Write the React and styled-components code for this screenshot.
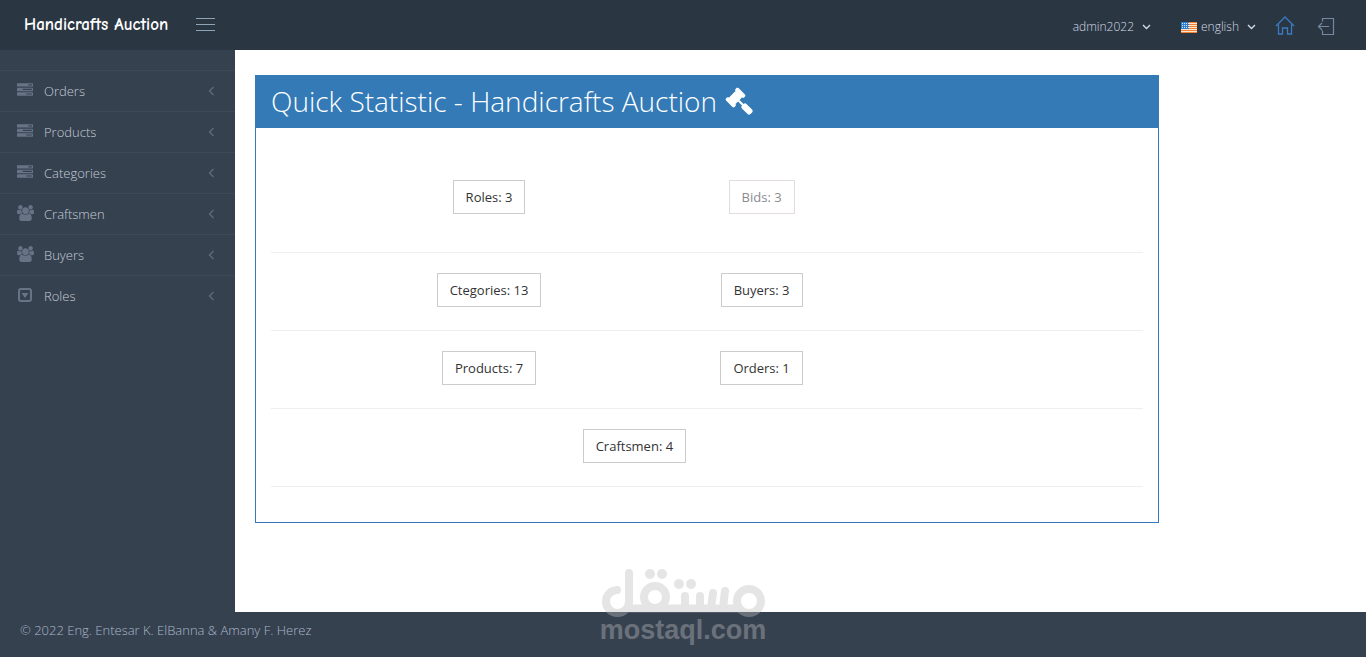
import React from "react";
import styled, { createGlobalStyle } from "styled-components";

const GlobalStyle = createGlobalStyle`
  * { box-sizing: border-box; }
  body {
    margin: 0;
    background: #364150;
    color: #333;
    font-family: "Open Sans", "Noto Sans", sans-serif;
    font-size: 13px;
    line-height: 20px;
  }
`;

const Page = styled.div`
  position: relative;
  display: flex;
  flex-direction: column;
  min-height: 100vh;
`;

const Header = styled.header`
  display: flex;
  align-items: center;
  height: 50px;
  background: #2b3643;
`;

const Brand = styled.a`
  width: 196px;
  padding-left: 24px;
  color: #fff;
  font-family: "Comic Sans MS", "Comic Neue", Lato, sans-serif;
  font-size: 17px;
  font-weight: 700;
  text-decoration: none;
  white-space: nowrap;
`;

const PlainButton = styled.button`
  display: flex;
  align-items: center;
  padding: 0;
  border: 0;
  background: none;
  color: #d3dbe5;
  font: inherit;
  cursor: pointer;
`;

const MenuToggle = styled(PlainButton)`
  flex-direction: column;
  gap: 5px;
  padding-bottom: 2px;
`;

const ToggleBar = styled.span`
  width: 19px;
  height: 1px;
  background: #8ea3b6;
`;

const TopNav = styled.nav`
  display: flex;
  align-items: center;
  margin-left: auto;
  padding: 2px 31px 0 0;
`;

const NavButton = styled(PlainButton)`
  margin-right: ${(p) => p.$space}px;
  padding-top: 2px;
  font-size: 12px;
  font-weight: 300;
  gap: ${(p) => p.$gap}px;
`;

const NavLabel = styled.span`
  margin-right: 4px;
`;

const IconLink = styled.a`
  display: flex;
  margin-right: ${(p) => p.$space || 0}px;
  color: ${(p) => p.$color};
`;

const Body = styled.div`
  display: flex;
  flex: 1;
`;

const Sidebar = styled.nav`
  flex: 0 0 235px;
  padding-top: 20px;
`;

const Menu = styled.ul`
  margin: 0;
  padding: 0;
  list-style: none;
`;

const MenuLink = styled.a`
  display: flex;
  align-items: center;
  height: 41px;
  padding: 0 20px 0 16px;
  border-top: 1px solid #3d4957;
  color: #c3cbd6;
  font-weight: 300;
  text-decoration: none;
`;

const MenuIcon = styled.span`
  display: flex;
  justify-content: center;
  width: 18px;
  margin-right: 10px;
  padding-bottom: 2px;
  color: #687485;
`;

const MenuArrow = styled.svg`
  margin-left: auto;
  color: #606c7d;
`;

const Content = styled.main`
  flex: 1;
  padding: 25px 20px 40px;
  background: #fff;
`;

const Panel = styled.section`
  width: calc((100% + 30px) * 10 / 12 - 30px);
  border: 1px solid #337ab7;
`;

const PanelTitle = styled.h1`
  display: flex;
  align-items: center;
  gap: 8px;
  height: 52px;
  margin: 0;
  padding: 0 15px 2px;
  background: #337ab7;
  color: #fff;
  font-size: 28px;
  font-weight: 300;
`;

const PanelBody = styled.div`
  padding: 52px 15px 35px;
`;

const StatRow = styled.div`
  display: grid;
  grid-template-columns: ${(p) => (p.$single ? "10fr 2fr" : "4fr 1fr 3fr")};
  justify-items: center;
  padding-bottom: ${(p) => (p.$tall ? 38 : 23)}px;
  border-bottom: 1px solid #eee;
  & + & { padding-top: 20px; }
`;

const StatButton = styled.button`
  height: 34px;
  padding: 0 12px;
  border: 1px solid ${(p) => (p.$muted ? "#e2dcdc" : "#ccc")};
  background: #fff;
  color: ${(p) => (p.$muted ? "#8a8a8f" : "#333")};
  font: inherit;
  white-space: nowrap;
`;

const Footer = styled.footer`
  height: 45px;
  padding: 8px 20px 5px;
  color: #a9b6c8;
  font-weight: 300;
`;

const Watermark = styled.div`
  position: absolute;
  left: 50%;
  bottom: 14px;
  display: flex;
  flex-direction: column;
  align-items: center;
  width: 166px;
  margin-left: -83px;
  color: #bebebe;
  opacity: 0.39;
  font: bold 27px/26px "Liberation Sans", sans-serif;
  pointer-events: none;
`;

const ICONS = {
  tasks: {
    box: "0 0 1792 1792",
    size: [16, 16],
    d: "M1024 1408h640v-128h-640v128zM640 896h1024v-128h-1024v128zM1280 384h384v-128h-384v128zM1792 1216v256q0 26-19 45t-45 19h-1664q-26 0-45-19t-19-45v-256q0-26 19-45t45-19h1664q26 0 45 19t19 45zm0-512v256q0 26-19 45t-45 19h-1664q-26 0-45-19t-19-45v-256q0-26 19-45t45-19h1664q26 0 45 19t19 45zm0-512v256q0 26-19 45t-45 19h-1664q-26 0-45-19t-19-45v-256q0-26 19-45t45-19h1664q26 0 45 19t19 45z",
  },
  users: {
    box: "0 0 1920 1792",
    size: [17, 16],
    d: "M593 896q-162 5-265 128h-134q-82 0-138-40.5t-56-118.5q0-353 124-353 6 0 43.5 21t97.5 42.5 119 21.5q67 0 133-23-5 37-5 66 0 139 81 256zm1071 637q0 120-73 189.5t-194 69.5h-874q-121 0-194-69.5t-73-189.5q0-53 3.5-103.5t14-109 26.5-108.5 43-97.5 62-81 85.5-53.5 111.5-20q10 0 43 21.5t73 48 107 48 135 21.5 135-21.5 107-48 73-48 43-21.5q61 0 111.5 20t85.5 53.5 62 81 43 97.5 26.5 108.5 14 109 3.5 103.5zm-1024-1277q0 106-75 181t-181 75-181-75-75-181 75-181 181-75 181 75 75 181zm704 384q0 159-112.5 271.5t-271.5 112.5-271.5-112.5-112.5-271.5 112.5-271.5 271.5-112.5 271.5 112.5 112.5 271.5zm576 225q0 78-56 118.5t-138 40.5h-134q-103-123-265-128 81-117 81-256 0-29-5-66 66 23 133 23 59 0 119-21.5t97.5-42.5 43.5-21q124 0 124 353zm-128-609q0 106-75 181t-181 75-181-75-75-181 75-181 181-75 181 75 75 181z",
  },
  caret: {
    box: "0 0 16 16",
    size: [16, 16],
    d: "M4 1h8q3 0 3 3v8q0 3-3 3H4q-3 0-3-3V4q0-3 3-3zm0 2q-1 0-1 1v8q0 1 1 1h8q1 0 1-1V4q0-1-1-1zM4.5 6h7L8 11z",
  },
  gavel: {
    box: "0 0 1792 1792",
    size: [28, 28],
    d: "M1771 1536q0 53-37 90l-107 108q-39 37-91 37-53 0-90-37l-363-364q-38-36-38-90 0-53 43-96l-256-256-126 126q-14 14-34 14t-34-14q2 2 12.5 12t12.5 13 10 11.5 10 13.5 6 13.5 5.5 16.5 1.5 18q0 38-28 68-3 3-16.5 18t-19 20.5-18.5 16.5-22 15.5-22 9-26 4.5q-40 0-68-28l-408-408q-28-28-28-68 0-13 4.5-26t9-22 15.5-22 16.5-18.5 20.5-19 18-16.5q30-28 68-28 10 0 18 1.5t16.5 5.5 13.5 6 13.5 10 11.5 10 13 12.5 12 12.5q-14-14-14-34t14-34l348-348q14-14 34-14t34 14q-2-2-12.5-12t-12.5-13-10-11.5-10-13.5-6-13.5-5.5-16.5-1.5-18q0-38 28-68 3-3 16.5-18t19-20.5 18.5-16.5 22-15.5 22-9 26-4.5q40 0 68 28l408 408q28 28 28 68 0 13-4.5 26t-9 22-15.5 22-16.5 18.5-20.5 19-18 16.5q-30 28-68 28-10 0-18-1.5t-16.5-5.5-13.5-6-13.5-10-11.5-10-13-12.5-12-12.5q14 14 14 34t-14 34l-126 126 256 256q43-43 96-43 52 0 91 37l363 363q37 39 37 91z",
  },
};

function Glyph({ name }) {
  const { box, size, d } = ICONS[name];
  return (
    <svg width={size[0]} height={size[1]} viewBox={box} fill="currentColor" fillRule={name === "caret" ? "evenodd" : "nonzero"} aria-hidden="true">
      <path d={d} />
    </svg>
  );
}

function ChevronDown() {
  return (
    <svg width="9" height="6" viewBox="0 0 9 6" fill="none" stroke="currentColor" strokeWidth="1.4" aria-hidden="true">
      <path d="M1 1l3.5 3.5L8 1" />
    </svg>
  );
}

function Flag() {
  return (
    <svg width="16" height="12" viewBox="0 0 16 12" aria-hidden="true">
      <rect y="1" width="16" height="11" fill="#fbe3cc" />
      <path d="M0 1.5h16M0 3.500h16M0 5.500h16M0 7.500h16M0 9.500h16M0 11.500h16" stroke="#ee8434" />
      <rect y="1" width="8" height="7" fill="#2c7fd0" />
      <path d="M1 2.500h7M1 4.500h7M1 6.500h7" stroke="#d5e8f8" strokeDasharray="1 1" />
    </svg>
  );
}

const MENU = [
  ["Orders", "tasks"],
  ["Products", "tasks"],
  ["Categories", "tasks"],
  ["Craftsmen", "users"],
  ["Buyers", "users"],
  ["Roles", "caret"],
];

export default function App() {
  return (
    <Page>
      <GlobalStyle />
      <Header>
        <Brand href="#">Handicrafts Auction</Brand>
        <MenuToggle type="button" aria-label="Toggle menu">
          <ToggleBar />
          <ToggleBar />
          <ToggleBar />
        </MenuToggle>
        <TopNav aria-label="Account">
          <NavButton type="button" $space={30} $gap={4}>
            <NavLabel>admin2022</NavLabel>
            <ChevronDown />
          </NavButton>
          <NavButton type="button" $space={19} $gap={4}>
            <Flag />
            <NavLabel>english</NavLabel>
            <ChevronDown />
          </NavButton>
          <IconLink href="#" aria-label="Home" $color="#3b7cc0" $space={22}>
            <svg width="20" height="20" viewBox="0 0 20 20" fill="none" stroke="currentColor" strokeWidth="1.3">
              <path d="M1 10L10 1l9 9M3.500 8.500V18h4v-6h5v6h4V8.500" />
            </svg>
          </IconLink>
          <IconLink href="#" aria-label="Log out" $color="#7488a0">
            <svg width="18" height="20" viewBox="0 0 18 20" fill="none" stroke="currentColor" strokeWidth="1.2">
              <path d="M5.500 5.500v-3h11v16h-11v-4M12 10.500H1.500M5 7L1.500 10.500L5 14" />
            </svg>
          </IconLink>
        </TopNav>
      </Header>
      <Body>
        <Sidebar aria-label="Main">
          <Menu>
            {MENU.map(([label, icon]) => (
              <li key={label}>
                <MenuLink href="#">
                  <MenuIcon>
                    <Glyph name={icon} />
                  </MenuIcon>
                  {label}
                  <MenuArrow width="7" height="10" viewBox="0 0 7 10" fill="none" stroke="currentColor" strokeWidth="1.3" aria-hidden="true">
                    <path d="M5.500 1L1.500 5l4 4" />
                  </MenuArrow>
                </MenuLink>
              </li>
            ))}
          </Menu>
        </Sidebar>
        <Content>
          <Panel>
            <PanelTitle>
              Quick Statistic - Handicrafts Auction
              <Glyph name="gavel" />
            </PanelTitle>
            <PanelBody>
              <StatRow $tall>
                <StatButton type="button">Roles: 3</StatButton>
                <StatButton type="button" $muted>Bids: 3</StatButton>
              </StatRow>
              <StatRow>
                <StatButton type="button">Ctegories: 13</StatButton>
                <StatButton type="button">Buyers: 3</StatButton>
              </StatRow>
              <StatRow>
                <StatButton type="button">Products: 7</StatButton>
                <StatButton type="button">Orders: 1</StatButton>
              </StatRow>
              <StatRow $single>
                <StatButton type="button">Craftsmen: 4</StatButton>
              </StatRow>
            </PanelBody>
          </Panel>
        </Content>
      </Body>
      <Footer>© 2022 Eng. Entesar K. ElBanna &amp; Amany F. Herez</Footer>
      <Watermark>
        <svg width="166" height="50" viewBox="0 0 166 50" fill="none" stroke="currentColor" strokeWidth="8" strokeLinecap="round" strokeLinejoin="round" aria-hidden="true">
          <path d="M17 23a11.500 11.500 0 1 0 12 12V6M27 41.500H139M85 41V29M100 41V29M111 41l2-15M123 41l2-17" />
          <circle cx="55" cy="30" r="11" />
          <circle cx="149" cy="34" r="12" />
          <g fill="currentColor" stroke="none">
            <circle cx="50" cy="7" r="5" />
            <circle cx="62" cy="7" r="5" />
            <circle cx="79" cy="17" r="5" />
            <circle cx="91" cy="17" r="5" />
          </g>
        </svg>
        mostaql.com
      </Watermark>
    </Page>
  );
}
